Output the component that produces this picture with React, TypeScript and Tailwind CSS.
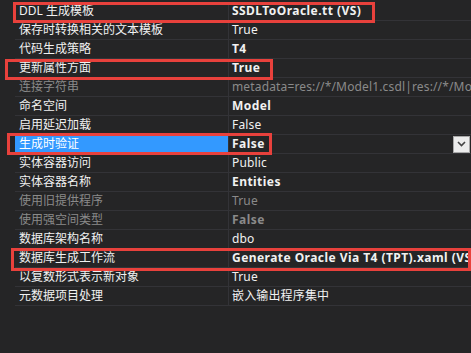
import React from "react";

type Row = { name: string; value: string; bold?: boolean; disabled?: boolean; selected?: boolean };

const rows: Row[] = [
  { name: "DDL 生成模板", value: "SSDLToOracle.tt (VS)", bold: true },
  { name: "保存时转换相关的文本模板", value: "True" },
  { name: "代码生成策略", value: "T4", bold: true },
  { name: "更新属性方面", value: "True", bold: true },
  { name: "连接字符串", value: "metadata=res://*/Model1.csdl|res://*/Model1.ssdl|res://*/Model1.msl", disabled: true },
  { name: "命名空间", value: "Model", bold: true },
  { name: "启用延迟加载", value: "False" },
  { name: "生成时验证", value: "False", bold: true, selected: true },
  { name: "实体容器访问", value: "Public" },
  { name: "实体容器名称", value: "Entities", bold: true },
  { name: "使用旧提供程序", value: "True", disabled: true },
  { name: "使用强空间类型", value: "False", bold: true, disabled: true },
  { name: "数据库架构名称", value: "dbo" },
  { name: "数据库生成工作流", value: "Generate Oracle Via T4 (TPT).xaml (VS)", bold: true },
  { name: "以复数形式表示新对象", value: "True" },
  { name: "元数据项目处理", value: "嵌入输出程序集中" },
];

function Dropdown() {
  return (
    <div className="shrink-0 mr-[1px] w-[17px] h-[17px] bg-[#ececec] border border-[#a8a8a8] flex items-center justify-center">
      <svg width="9" height="6" viewBox="0 0 9 6">
        <path d="M1 1 L4.5 4.5 L8 1" fill="none" stroke="#444" strokeWidth="1.6" />
      </svg>
    </div>
  );
}

export default function App() {
  return (
    <div
      className="relative w-[471px] h-[353px] overflow-hidden bg-[#252526] text-[12px] leading-[16px]"
      style={{ fontFamily: '"Noto Sans", "Noto Sans CJK SC", sans-serif' }}
    >
      <div className="flex flex-col pt-[2px]">
        {rows.map((r, i) => (
          <div key={i} className="flex h-[19px]">
            <div className="w-[15px] shrink-0" />
            <div
              className={
                "w-[214px] shrink-0 flex items-center pl-[4px] border-b border-r border-[#333337] whitespace-nowrap " +
                (r.selected ? "bg-[#3399ff] text-white" : r.disabled ? "text-[#8a8a8a]" : "text-[#f1f1f1]")
              }
            >
              {r.name}
            </div>
            <div className="flex-1 min-w-0 flex items-center justify-between border-b border-[#333337]">
              <span
                className={
                  "min-w-0 pl-[3px] whitespace-nowrap " +
                  (r.bold ? "font-bold tracking-[0.45px] " : "tracking-[0.15px] ") +
                  (r.disabled ? "text-[#8a8a8a]" : "text-[#f1f1f1]")
                }
              >
                {r.value}
              </span>
              {r.selected && <Dropdown />}
            </div>
          </div>
        ))}
      </div>

      {/* red highlight boxes (annotations over the grid) */}
      <div className="absolute left-[13px] top-[2px] w-[362px] h-[21px] border-[3px] border-[#e8413c]" />
      <div className="absolute left-[5px] top-[59px] w-[268px] h-[21px] border-[3px] border-[#e8413c]" />
      <div className="absolute left-[7px] top-[133px] w-[265px] h-[22px] border-[3px] border-[#e8413c]" />
      <div className="absolute left-[11px] top-[248px] w-[460px] h-[23px] border-[3px] border-[#e8413c]" />
    </div>
  );
}
